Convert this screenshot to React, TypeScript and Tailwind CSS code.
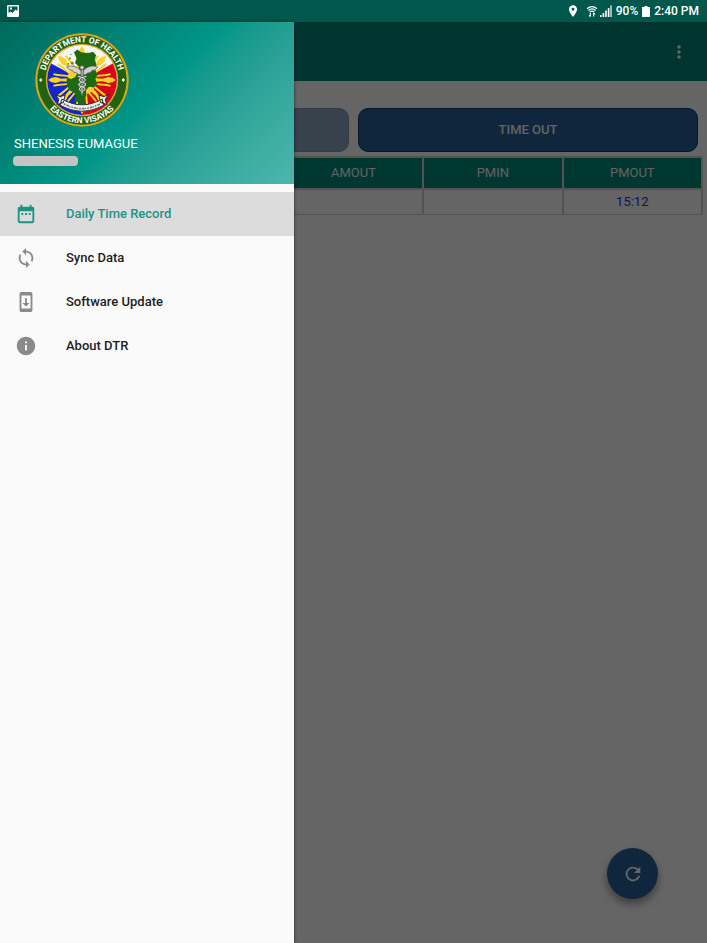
import type { ReactNode } from "react";
import {
  MdDateRange,
  MdInfo,
  MdLocationOn,
  MdMoreVert,
  MdRefresh,
  MdSync,
  MdSystemUpdate,
} from "react-icons/md";

const RAY_ANGLES = [0, 45, 90, 135, 180, 225, 270, 315];

function Seal() {
  return (
    <svg
      viewBox="0 0 280 280"
      className="ml-[21px] size-[94px]"
      role="img"
      aria-label="Department of Health Eastern Visayas seal"
    >
      <defs>
        <path id="arc-top" d="M28 140 A112 112 0 0 1 252 140" />
        <path id="arc-bottom" d="M11 140 A129 129 0 0 0 269 140" />
        <clipPath id="disc">
          <circle cx="140" cy="140" r="104" />
        </clipPath>
      </defs>
      <circle cx="140" cy="140" r="139" fill="#d9a516" />
      <circle cx="140" cy="140" r="133" fill="#1f6310" />
      <circle cx="140" cy="140" r="108" fill="#e0a91a" />
      <g clipPath="url(#disc)">
        <rect width="280" height="280" fill="#f7f6fb" />
        <path d="M140 140 L20 76 L0 280 H140 Z" fill="#1226cc" />
        <path d="M140 140 L260 76 L280 280 H140 Z" fill="#d8061a" />
        <g fill="#fbd320">
          {RAY_ANGLES.map((angle) => (
            <g key={angle} transform={`rotate(${angle} 140 140)`}>
              <path d="M133 120 L136 78 L131 62 L133 49 L140 39 L147 49 L149 62 L144 78 L147 120 Z" />
              <path d="M127 115 L122 68 L120 56 L125 54 L128 66 L132 115 Z" />
              <path d="M153 115 L158 68 L160 56 L155 54 L152 66 L148 115 Z" />
            </g>
          ))}
          <circle cx="140" cy="140" r="44" />
        </g>
      </g>
      <path
        d="M116 58 L126 49 L138 57 L158 60 L173 56 L182 66 L178 79 L183 94 L179 108 L186 126 L180 137 L186 152 L176 162 L161 160 L152 170 L153 185 L147 198 L151 215 L136 220 L127 205 L117 208 L122 187 L117 178 L101 169 L94 148 L95 132 L107 137 L119 132 L126 120 L131 100 L119 89 L124 76 Z"
        fill="#1e6a12"
      />
      <g fill="#6d8a12">
        <circle cx="104" cy="76" r="3" />
        <circle cx="111" cy="90" r="4" />
        <circle cx="99" cy="92" r="3" />
        <circle cx="107" cy="64" r="2" />
      </g>
      <g fill="#d2d2d2" stroke="#555" strokeWidth="2">
        <path d="M137 112 Q118 92 94 101 Q99 112 112 112 Q113 120 125 119 Q128 126 138 124 Z" />
        <path d="M144 112 Q163 92 187 101 Q182 112 169 112 Q168 120 156 119 Q153 126 143 124 Z" />
        <path d="M138 106 H143 V178 L140 188 L137 178 Z" />
        <circle cx="140" cy="103" r="6" />
      </g>
      <path
        d="M128 129 Q162 137 142 146 Q118 154 143 161 Q156 167 140 174 M153 129 Q119 137 139 146 Q163 154 138 161 Q125 167 140 174"
        fill="none"
        stroke="#4c5a48"
        strokeWidth="6"
      />
      <path
        d="M128 129 Q162 137 142 146 Q118 154 143 161 Q156 167 140 174 M153 129 Q119 137 139 146 Q163 154 138 161 Q125 167 140 174"
        fill="none"
        stroke="#dedede"
        strokeWidth="3"
      />
      <path
        d="M62 184 L76 190 L90 184 L84 207 L66 213 L71 199 Z M218 184 L204 190 L190 184 L196 207 L214 213 L209 199 Z M80 197 Q140 231 200 197 L205 215 Q140 251 75 215 Z"
        fill="#f1f1f1"
        stroke="#333"
        strokeWidth="3"
      />
      <path
        d="M86 211 Q140 240 194 211"
        fill="none"
        stroke="#777"
        strokeWidth="5"
        strokeDasharray="5 3 8 2 3 3"
      />
      <path d="M12 140 L17 134 L22 140 L17 146 Z M258 140 L263 134 L268 140 L263 146 Z" fill="#fff" />
      <g fill="#fff" fontSize="25" fontWeight="700" textAnchor="middle">
        <text>
          <textPath href="#arc-top" startOffset="50%">
            DEPARTMENT OF HEALTH
          </textPath>
        </text>
        <text>
          <textPath href="#arc-bottom" startOffset="50%">
            EASTERN VISAYAS
          </textPath>
        </text>
      </g>
    </svg>
  );
}

function PictureIcon() {
  return (
    <svg viewBox="0 0 12 12" className="-ml-px size-3" aria-hidden="true">
      <path
        fill="#fff"
        fillRule="evenodd"
        d="M1 0 H11 Q12 0 12 1 V11 Q12 12 11 12 H1 Q0 12 0 11 V1 Q0 0 1 0 Z M1.5 1.5 V8 L3.5 6.5 L5.5 8 L8.5 4.5 L10.5 6 V1.5 Z M3 2.5 H5 V4.5 H3 Z"
      />
    </svg>
  );
}

function WifiIcon() {
  return (
    <svg viewBox="0 0 12 14" className="ml-1.5 h-3.5 w-3" fill="none" stroke="#fff" aria-hidden="true">
      <path d="M1 4.8 Q6 0.4 11 4.8 M2.4 6.5 Q6 3.2 9.6 6.5 M3.8 8.2 Q6 6 8.2 8.2" strokeWidth="1.3" />
      <path d="M4.4 9 V12.6 M3.2 11.2 L4.4 12.6 M7.6 12.6 V9 M8.8 10.4 L7.6 9" strokeWidth="1.3" />
    </svg>
  );
}

function SignalIcon() {
  return (
    <svg viewBox="0 0 12 12" className="ml-0.5 size-3" fill="#fff" aria-hidden="true">
      <path d="M0 10h1.6v2H0z M2.6 8h1.6v4H2.6z M5.2 5.5h1.6V12H5.2z M7.8 3h1.6v9H7.8z" />
      <path d="M10.2 0.5h1.6V12h-1.6z" fillOpacity="0.75" />
    </svg>
  );
}

function BatteryIcon() {
  return (
    <svg viewBox="0 0 8 12" className="mx-1 h-3 w-2" fill="#fff" aria-hidden="true">
      <path d="M2.5 1h3v1H8v10H0V2h2.5z" />
    </svg>
  );
}

function StatusBar() {
  return (
    <div className="flex h-[22px] items-center bg-[#00574b] px-2 text-[12px] leading-none font-medium text-white">
      <PictureIcon />
      <div className="ml-auto flex items-center">
        <MdLocationOn className="size-3.5" aria-hidden="true" />
        <WifiIcon />
        <SignalIcon />
        <span className="ml-1">90%</span>
        <BatteryIcon />
        <span>2:40 PM</span>
      </div>
    </div>
  );
}

type NavItemProps = { icon: ReactNode; label: string; active?: boolean };

function NavItem({ icon, label, active = false }: NavItemProps) {
  return (
    <li>
      <a
        href="#"
        aria-current={active ? "page" : undefined}
        className={
          active
            ? "flex h-11 items-center gap-[29px] bg-[#dcdcdc] px-[15px] text-[13px] font-medium text-[#1c9484]"
            : "flex h-11 items-center gap-[29px] px-[15px] text-[13px] font-medium text-[#1d1d1d]"
        }
      >
        <span className={active ? "text-[22px]" : "text-[22px] text-[#8a8a8a]"}>{icon}</span>
        {label}
      </a>
    </li>
  );
}

function Drawer() {
  return (
    <aside className="absolute inset-y-0 left-0 w-[294px] bg-[#fafafa] shadow-[0_0_3px_rgba(0,0,0,0.6)]">
      <header className="h-[162px] bg-linear-135 from-[#00695c] via-[#009688] to-[#4db6ac] px-3.5 pt-[11px] text-white">
        <Seal />
        <p className="mt-2 text-[13px] leading-[18px]">SHENESIS EUMAGUE</p>
        <div className="mt-[3px] -ml-px h-2.5 w-[65px] rounded-sm bg-[#c4c4c4]" />
      </header>
      <nav className="pt-2">
        <ul>
          <NavItem icon={<MdDateRange />} label="Daily Time Record" active />
          <NavItem icon={<MdSync />} label="Sync Data" />
          <NavItem icon={<MdSystemUpdate />} label="Software Update" />
          <NavItem icon={<MdInfo />} label="About DTR" />
        </ul>
      </nav>
    </aside>
  );
}

const COLUMNS = ["", "", "AMOUT", "PMIN", "PMOUT"];
const ROW = ["", "", "", "", "15:12"];

function Records() {
  return (
    <div className="px-1">
      <table className="mt-1 w-full table-fixed border-collapse text-center text-[13px]">
        <thead>
          <tr className="h-8 bg-[#008a7b] text-[#f5f5f5]">
            {COLUMNS.map((name, i) => (
              <th key={i} scope="col" className="border-2 border-[#d0d0d0] p-0 font-normal">
                {name}
              </th>
            ))}
          </tr>
        </thead>
        <tbody>
          <tr className="h-[25px] text-[#2a2ae0]">
            {ROW.map((value, i) => (
              <td key={i} className="border-x-2 border-b border-[#d0d0d0] p-0">
                {value}
              </td>
            ))}
          </tr>
        </tbody>
      </table>
    </div>
  );
}

export default function App() {
  return (
    <div className="flex min-h-screen flex-col font-[Roboto,sans-serif]">
      <StatusBar />
      <div className="relative flex-1 bg-[#fcfcfc]">
        <div className="flex h-[59px] items-center justify-end bg-[#008577] px-[18px]">
          <button type="button" aria-label="More options" className="text-xl text-white">
            <MdMoreVert />
          </button>
        </div>
        <main className="pt-[27px]">
          <div className="flex gap-[9px] px-[9px]">
            <button
              type="button"
              aria-label="Time in"
              disabled
              className="h-11 flex-1 rounded-[10px] border border-[#7d98b8] bg-[#8ca5be]"
            />
            <button
              type="button"
              className="h-11 flex-1 rounded-[10px] border border-[#183c66] bg-[#285f96] text-[13px] font-medium text-[#f5f5f5]"
            >
              TIME OUT
            </button>
          </div>
          <Records />
        </main>
        <button
          type="button"
          aria-label="Refresh"
          className="absolute right-[49px] bottom-11 flex size-[51px] items-center justify-center rounded-full bg-[#285f96] text-[22px] text-white shadow-[0_5px_9px_rgba(0,0,0,0.4)]"
        >
          <MdRefresh />
        </button>
        <div className="absolute inset-0 bg-black/60" />
        <Drawer />
      </div>
    </div>
  );
}
